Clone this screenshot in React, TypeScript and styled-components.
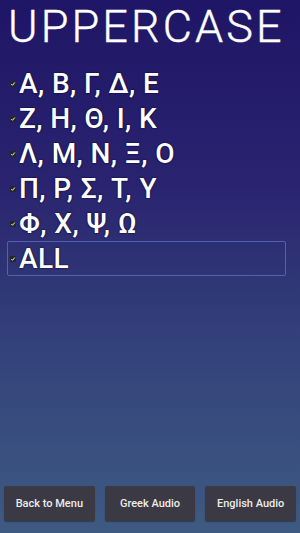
import React from "react";
import styled, { createGlobalStyle } from "styled-components";

const Global = createGlobalStyle`
  html, body { margin: 0; padding: 0; }
  body { width: 300px; height: 533px; overflow: hidden; }
  #root { height: 533px; }
`;

const Screen = styled.div`
  height: 533px;
  display: flex;
  flex-direction: column;
  background: linear-gradient(180deg, #1f1566 0%, #2a2470 35%, #33427a 65%, #3e5a82 100%);
  font-family: "Roboto", "Liberation Sans", sans-serif;
  color: #fff;
`;

const Title = styled.h1`
  margin: 0;
  padding: 0 0 0 8px;
  height: 60px;
  font-family: "Roboto", sans-serif;
  font-weight: 300;
  font-size: 45px;
  line-height: 53px;
  letter-spacing: 3.1px;
  color: #fff;
  white-space: nowrap;
  -webkit-text-stroke: 0.4px #fff;
`;

const List = styled.div`
  display: flex;
  flex-direction: column;
  padding: 6px 14px 0 7px;
`;

const Row = styled.div<{ $selected?: boolean }>`
  height: 35px;
  box-sizing: border-box;
  display: flex;
  align-items: center;
  gap: 3px;
  border: 1px solid ${(p) => (p.$selected ? "rgba(90,110,190,0.8)" : "transparent")};
  border-radius: 2px;
  padding-left: 2px;
`;

const Check = styled.span`
  width: 6px;
  height: 6px;
  background: #262626;
  border-radius: 1px;
  display: flex;
  align-items: center;
  justify-content: center;
  flex: none;
`;

const Label = styled.span`
  font-family: "Roboto", sans-serif;
  font-weight: 500;
  font-size: 28px;
  line-height: 34px;
  letter-spacing: 0.4px;
  color: #fff;
  text-shadow: 0 0 2px #0a0830, 0 0 1px #0a0830;
`;

const Spacer = styled.div`
  flex: 1;
`;

const Footer = styled.div`
  display: flex;
  gap: 10px;
  padding: 0 4px 12px 4px;
`;

const Button = styled.button`
  flex: 1;
  height: 35px;
  border: none;
  border-radius: 2px;
  background: #3a3944;
  color: #ececec;
  font-family: "Roboto", sans-serif;
  font-weight: 500;
  font-size: 11px;
  padding: 0;
  box-shadow: 0 1px 1px rgba(0,0,0,0.3);
`;

const rows = [
  "Α, Β, Γ, Δ, Ε",
  "Ζ, Η, Θ, Ι, Κ",
  "Λ, Μ, Ν, Ξ, Ο",
  "Π, Ρ, Σ, Τ, Υ",
  "Φ, Χ, Ψ, Ω",
  "ALL",
];

const CheckIcon = () => (
  <Check>
    <svg width="6" height="6" viewBox="0 0 6 6">
      <path d="M1.3 3.1 L2.5 4.3 L4.8 1.5" stroke="#f0f0f0" strokeWidth="1" fill="none" />
    </svg>
  </Check>
);

export default function App() {
  return (
    <>
      <Global />
      <Screen>
        <Title>UPPERCASE</Title>
        <List>
          {rows.map((r, i) => (
            <Row key={r} $selected={i === rows.length - 1}>
              <CheckIcon />
              <Label>{r}</Label>
            </Row>
          ))}
        </List>
        <Spacer />
        <Footer>
          <Button>Back to Menu</Button>
          <Button>Greek Audio</Button>
          <Button>English Audio</Button>
        </Footer>
      </Screen>
    </>
  );
}
